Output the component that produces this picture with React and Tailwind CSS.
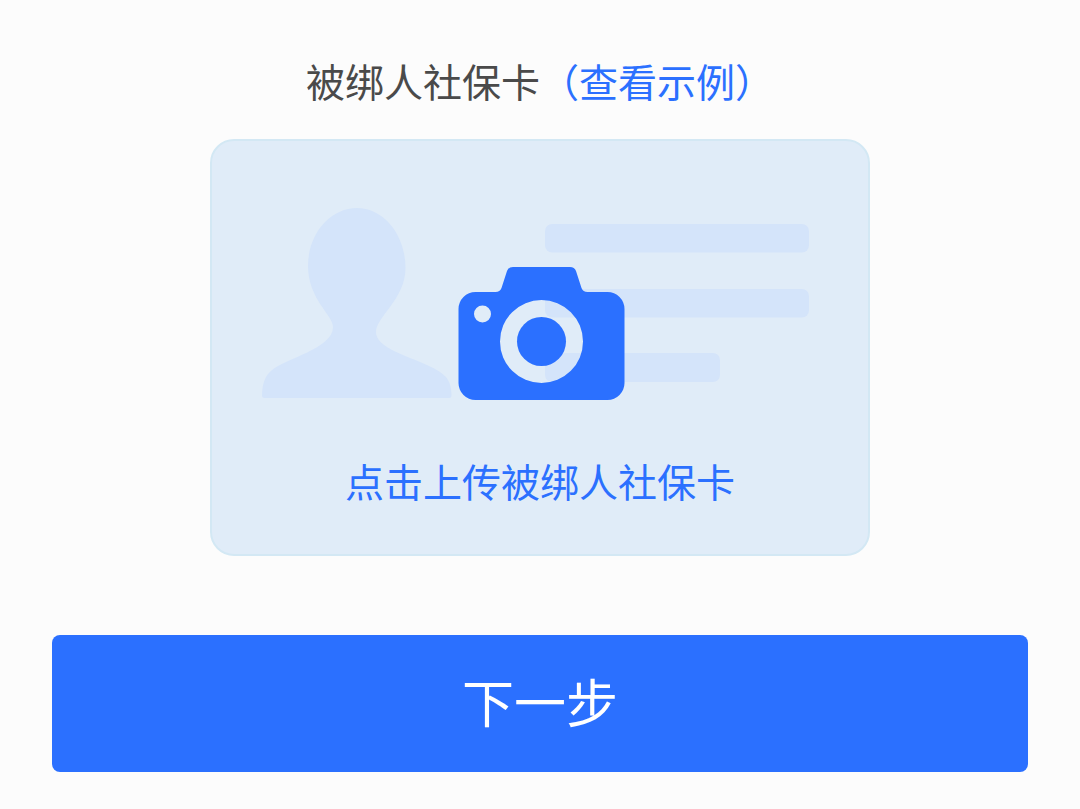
import React from "react";

function CardIllustration() {
  return (
    <svg
      viewBox="262 208 556 192"
      className="w-full max-w-[556px]"
      aria-hidden="true"
    >
      {/* Portrait */}
      <path
        fill="#d4e4fa"
        d="M357 208C384 208 405.500 235 405.500 268C405.500 299 376 317 376 332C376 353 431 360 446 377C450 382 451.500 388 451.500 396Q451.500 398 449 398H264.500Q262 398 262 396C262 384 265 376 271 371C285 358 333 349 333 327C333 315 308 299 308 266C308 234 330 208 357 208Z"
      />

      {/* Card text lines */}
      <g fill="#d4e4fa">
        <rect x="545" y="224" width="264" height="28.500" rx="7" />
        <rect x="545" y="289" width="264" height="28.500" rx="7" />
        <rect x="545" y="353" width="175" height="29" rx="7" />
      </g>

      {/* Camera */}
      <path
        fill="#2b70ff"
        fillRule="evenodd"
        d="M513 267H570Q574.500 267 576 271L581.500 288Q583 292 587.500 292H607.500A17 17 0 0 1 624.500 309V383A17 17 0 0 1 607.500 400H475.500A17 17 0 0 1 458.500 383V309A17 17 0 0 1 475.500 292H495.500Q500 292 501.500 288L507 271Q508.500 267 513 267ZM482.500 305.500a8.500 8.500 0 1 0 0 17a8.500 8.500 0 1 0 0-17ZM541.500 300a41.500 41.500 0 1 0 0 83a41.500 41.500 0 1 0 0-83Z"
      />
      <circle cx="541.500" cy="341.500" r="24.500" fill="#2b70ff" />
    </svg>
  );
}

function App() {
  return (
    <main className="min-h-screen bg-[#fcfcfc] px-[52px] pt-[52px] pb-9 font-['Noto_Sans_CJK_SC',sans-serif]">
      <h1 className="text-center text-[39px] leading-[56px] text-[#4a4a4a]">
        被绑人社保卡
        <a href="#example" className="text-[#2b70ff]">
          （查看示例）
        </a>
      </h1>

      <button
        type="button"
        className="mx-auto mt-[31px] flex w-full max-w-[660px] flex-col items-center rounded-3xl border-2 border-[#d3e8f4] bg-[#e0ecf8] px-8 pt-[67px] pb-[46px]"
      >
        <CardIllustration />
        <span className="mt-[52px] text-[39px] leading-[56px] text-[#2b70ff]">
          点击上传被绑人社保卡
        </span>
      </button>

      <button
        type="button"
        className="mt-[79px] w-full rounded-lg bg-[#2b70ff] pt-[29px] pb-[35px] text-[52px] leading-[73px] text-white"
      >
        下一步
      </button>
    </main>
  );
}

export default App;
